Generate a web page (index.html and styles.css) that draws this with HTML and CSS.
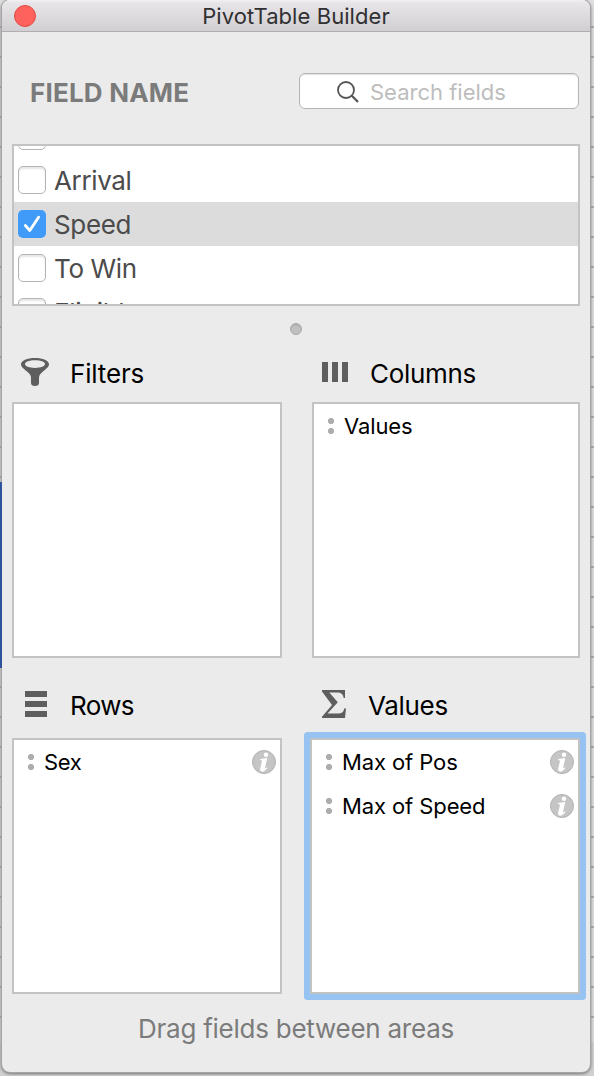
FILE: index.html
```html
<!DOCTYPE html>
<html lang="en">
<head>
<meta charset="utf-8">
<title>PivotTable Builder</title>
<link rel="stylesheet" href="styles.css">
</head>
<body>
<svg width="0" height="0" class="defs">
  <symbol id="info" viewBox="0 0 24 24">
    <circle cx="12" cy="12" r="11.5" fill="#c5c5c5" stroke="#b2b2b2"/>
    <circle cx="14" cy="4.7" r="2.2" fill="#fff"/>
    <path d="M8.3 8.900 15.300 8.100 13 18Q12.900 19.200 15.100 17.300L15.500 18.100Q12.700 21.700 10.200 21.700 7.600 21.500 8.200 18.400L10 10.900Q10.100 10.100 8.200 10.200Z" fill="#fff"/>
  </symbol>
</svg>
<div class="sheet"></div>
<main class="window">
  <header class="titlebar"><span class="close"></span><span class="title">PivotTable Builder</span></header>
  <section class="search-row">
    <h2 class="field-name">FIELD NAME</h2>
    <div class="search">
      <svg width="24" height="24" viewBox="0 0 24 24" fill="none" stroke="#555" stroke-width="1.8"><circle cx="10" cy="10" r="8"/><path d="M15.800 15.800 22 22" stroke-width="2.2"/></svg>
      <span class="placeholder">Search fields</span>
    </div>
  </section>
  <ul class="fields">
    <li class="field"><span class="check"></span></li>
    <li class="field"><span class="check"></span><span>Arrival</span></li>
    <li class="field selected"><span class="check on"><svg width="28" height="28" viewBox="0 0 28 28" fill="none" stroke="#fff" stroke-width="2.8" stroke-linecap="round" stroke-linejoin="round"><path d="M7.300 15.500 11.800 20.500 20.600 7.200"/></svg></span><span>Speed</span></li>
    <li class="field"><span class="check"></span><span>To Win</span></li>
    <li class="field"><span class="check"></span><span>Eligible</span></li>
  </ul>
  <div class="splitter"><span class="knob"></span></div>
  <section class="areas">
    <div class="area">
      <h3 class="area-head"><svg class="icon" width="34" height="32" viewBox="0 0 34 32"><path fill="#5e5e5e" fill-rule="evenodd" d="M17 2C25 2 31 4.500 31 8.300C31 11 28.500 12.500 25 15.500C22 18 21 19.500 21 22V27Q21 30 17 30Q13 30 13 27V22C13 19.500 12 18 9 15.500C5.500 12.500 3 11 3 8.300C3 4.500 9 2 17 2ZM17 4.200C11 4.200 7 5.800 7 8.100S11 12 17 12S27 10.400 27 8.100S23 4.200 17 4.200Z"/></svg><span class="area-title filters">Filters</span></h3>
      <div class="box"></div>
    </div>
    <div class="area">
      <h3 class="area-head"><svg class="icon" width="34" height="32" viewBox="0 0 34 32"><path fill="#5e5e5e" d="M4 6h6v20H4zM14 6h6v20h-6zM24 6h6v20h-6z"/></svg><span class="area-title">Columns</span></h3>
      <div class="box"><div class="item"><span class="grip"></span><span>Values</span></div></div>
    </div>
    <div class="area lower">
      <h3 class="area-head"><svg class="icon" width="34" height="32" viewBox="0 0 34 32"><path fill="#5e5e5e" d="M7 3h22v6H7zM7 13h22v6H7zM7 23h22v6H7z"/></svg><span class="area-title rows">Rows</span></h3>
      <div class="box"><div class="item"><span class="grip"></span><span class="sex">Sex</span><svg class="info" width="24" height="24"><use href="#info"/></svg></div></div>
    </div>
    <div class="area lower active">
      <h3 class="area-head"><svg class="icon" width="34" height="32" viewBox="0 0 34 32"><path fill="#5e5e5e" d="M6 2H29V10H27.700Q27 4.500 21.500 4.500H13.300L21.800 14.300 11.500 25.500H22.500Q27.500 25.500 28.200 20.500H30L29 30H6V28.700L16 17 6 3.500Z"/></svg><span class="area-title">Values</span></h3>
      <div class="box">
        <div class="item"><span class="grip"></span><span>Max of Pos</span><svg class="info" width="24" height="24"><use href="#info"/></svg></div>
        <div class="item"><span class="grip"></span><span>Max of Speed</span><svg class="info" width="24" height="24"><use href="#info"/></svg></div>
      </div>
    </div>
  </section>
  <footer class="hint">Drag fields between areas</footer>
</main>
<div class="selection"></div>
</body>
</html>
```
FILE: styles.css
```css
* { box-sizing: border-box; }
body { margin: 0; width: 594px; height: 1076px; overflow: hidden; position: relative; background: #d0d0d0; font-family: Inter, "Liberation Sans", sans-serif; color: #000; }
h2, h3, ul { margin: 0; padding: 0; font-weight: 400; list-style: none; }
.defs { position: absolute; }
.sheet { position: absolute; inset: 0 0 34px; background: repeating-linear-gradient(#dedede 0 26px, #ababab 26px 28px, #dedede 28px 30px); }
.selection { position: absolute; left: 0; top: 482px; width: 2px; height: 186px; background: #2e539c; }
.window { position: relative; width: 588px; height: 1072px; margin-left: 2px; background: #ebebeb; border-radius: 8px; box-shadow: 0 0 0 1px #a5a5a5, 0 1px 3px 1px #777; }
.titlebar { position: relative; height: 32px; padding-top: 1px; border-bottom: 1px solid #b0aeb0; border-radius: 8px 8px 0 0; background: linear-gradient(#f2f0f2 0, #e7e5e7 3px, #d1cfd1 100%); display: flex; align-items: center; justify-content: center; }
.close { position: absolute; left: 12px; top: 5px; width: 22px; height: 22px; border-radius: 50%; background: #ff615c; border: 1px solid #e54844; }
.title { font-size: 22px; color: #302f31; letter-spacing: .07px; }
.search-row { height: 112px; padding: 41px 11px 0 28px; display: flex; justify-content: space-between; align-items: flex-start; }
.field-name { padding-top: 1px; font-size: 26px; line-height: 38px; font-weight: 700; letter-spacing: .2px; color: #7b7b7b; }
.search { width: 280px; height: 36px; border: 1px solid #b5b5b5; border-radius: 6px; background: #fff; box-shadow: inset 0 1px 1px #e2e2e2; display: flex; align-items: center; padding: 2px 0 0 36px; gap: 10px; }
.placeholder { font-size: 22px; color: #bdbdbd; }
.fields { height: 162px; width: 568px; margin-left: 10px; border: 2px solid #c3c3c3; background: #fff; overflow: hidden; display: flex; flex-direction: column; }
.field { flex: 0 0 44px; display: flex; align-items: center; gap: 8px; padding-left: 4px; font-size: 26px; letter-spacing: -.35px; color: #4b4b4b; }
.field:first-child { margin-top: -32px; }
.selected { background: #dcdcdc; }
.check { width: 28px; height: 28px; border: 1px solid #b4b4b4; border-radius: 5px; background: #fff; box-shadow: inset 0 2px 2px #e6e6e6; display: flex; align-items: center; justify-content: center; }
.check.on { background: #409bf8; border: 0; box-shadow: none; }
.splitter { height: 44px; padding: 17px 0 0 288px; }
.knob { display: block; width: 12px; height: 12px; border-radius: 50%; background: #c0c0c0; border: 1px solid #ababab; box-shadow: inset 0 1px 1px #a2a2a2; }
.areas { display: grid; grid-template-columns: 270px 268px; column-gap: 30px; row-gap: 28px; padding-left: 10px; }
.area-head { height: 52px; display: flex; align-items: center; padding-bottom: 8px; font-size: 26px; letter-spacing: -.32px; }
.lower .area-head { padding-bottom: 16px; }
.icon { flex: none; margin: 0 18px 0 6px; }
.area-title { padding-top: 3px; }
.filters { letter-spacing: -.15px; }
.rows { letter-spacing: -.65px; }
.box { height: 256px; border: 2px solid #c3c3c3; background: #fff; }
.item { height: 44px; display: flex; align-items: center; padding: 0 4px 0 14px; font-size: 22px; letter-spacing: -.1px; }
.sex { letter-spacing: -.3px; }
.grip { width: 6px; height: 16px; margin-right: 10px; background: radial-gradient(circle at 3px 3px, #adadad 2.8px, transparent 3.3px) 0 0 / 6px 10px repeat-y; }
.info { margin-left: auto; }
.active .box { margin-left: -2px; box-shadow: 0 0 0 6px #96c3f2; border-radius: 1px; }
.active .icon { margin: 0 18px 0 4px; }
.hint { margin-top: 16px; text-align: center; font-size: 26px; line-height: 38px; letter-spacing: -.25px; color: #7b7b7b; }
```
